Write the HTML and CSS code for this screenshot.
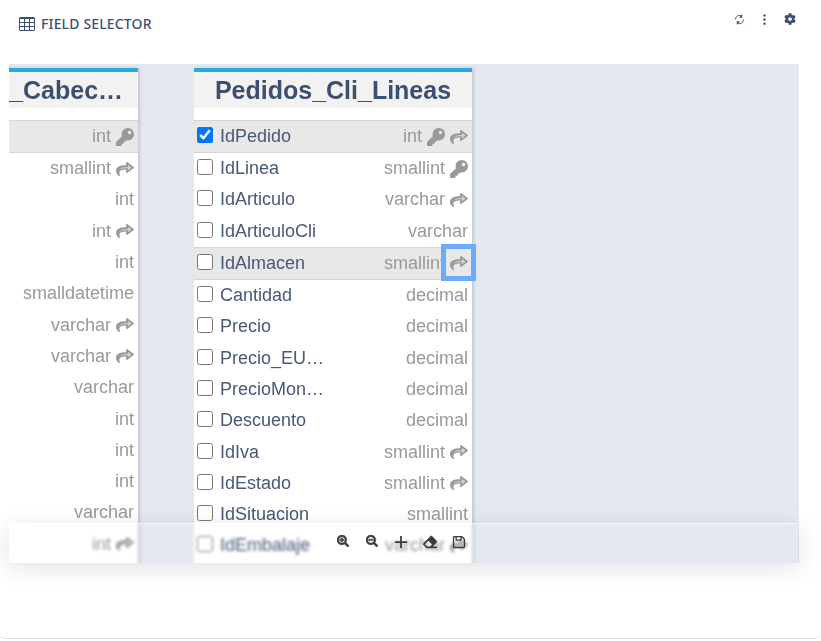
FILE: index.html
```html
<!DOCTYPE html>
<html lang="en">
<head>
  <meta charset="UTF-8" />
  <title>Field Selector</title>
  <link rel="stylesheet" href="styles.css">
</head>
<body>
  <svg class="icon-defs" width="0" height="0">
    <symbol id="key" viewBox="0 0 512 512"><path d="M512 176.001C512 273.203 433.202 352 336 352c-11.22 0-22.19-1.062-32.827-3.069l-24.012 27.014A23.999 23.999 0 0 1 261.223 384H224v40c0 13.255-10.745 24-24 24h-40v40c0 13.255-10.745 24-24 24H24c-13.255 0-24-10.745-24-24v-78.059c0-6.365 2.529-12.47 7.029-16.971l161.802-161.802C163.108 213.814 160 195.271 160 176 160 78.797 238.797.001 335.999 0 433.488-.001 512 78.511 512 176.001zM336 128c0 26.51 21.49 48 48 48s48-21.49 48-48-21.49-48-48-48-48 21.49-48 48z"/></symbol>
    <symbol id="share" viewBox="0 30 512 450" preserveAspectRatio="none"><path d="M503.691 189.836L327.687 37.851C312.281 24.546 288 35.347 288 56.015v80.053C127.371 137.907 0 170.1 0 322.326c0 61.441 39.581 122.309 83.333 154.132 13.653 9.931 33.111-2.533 28.077-18.631C66.066 312.814 132.917 274.316 288 272.085V360c0 20.7 24.3 31.453 39.687 18.164l176.004-152c11.071-9.562 11.086-26.753 0-36.328z"/><path fill="#fff" fill-opacity="0.55" d="M340 115v72c-120 0-205 22-245 90 50-36 130-46 245-46v72l100-94z"/></symbol>
  </svg>

  <div class="card">
    <header class="card-head">
      <div class="card-title">
        <svg class="title-icon" viewBox="0 0 512 512"><path d="M464 32H48C21.49 32 0 53.49 0 80v352c0 26.51 21.49 48 48 48h416c26.51 0 48-21.49 48-48V80c0-26.51-21.49-48-48-48zM160 448H48c-8.837 0-16-7.163-16-16v-80h128v96zm0-128H32v-96h128v96zm0-128H32V96h128v96zm160 256H192v-96h128v96zm0-128H192v-96h128v96zm0-128H192V96h128v96zm160 160v80c0 8.837-7.163 16-16 16H352v-96h128zm0-32H352v-96h128v96zm0-128H352V96h128v96z"/></svg>
        <span>FIELD SELECTOR</span>
      </div>
      <div class="card-actions">
        <svg class="act act-sync" viewBox="0 0 24 24"><path d="M21 12a9 9 0 0 1-14 7.5M3 12a9 9 0 0 1 14-7.5"/><path class="solid" d="M18 0v8h-7zM6 24v-8h7z"/></svg>
        <svg class="act act-dots" viewBox="0 0 6 24"><circle cx="3" cy="3" r="2.6"/><circle cx="3" cy="12" r="2.6"/><circle cx="3" cy="21" r="2.6"/></svg>
        <svg class="act act-cog" viewBox="0 0 512 512"><path d="M487.4 315.7l-42.6-24.6c4.3-23.2 4.3-47 0-70.2l42.6-24.6c4.9-2.8 7.1-8.6 5.5-14-11.1-35.6-30-67.8-54.7-94.6-3.8-4.1-10-5.1-14.8-2.3L380.8 110c-17.9-15.4-38.5-27.3-60.8-35.1V25.8c0-5.6-3.9-10.5-9.4-11.7-36.7-8.2-74.3-7.8-109.2 0-5.5 1.2-9.4 6.1-9.4 11.7V75c-22.2 7.9-42.8 19.8-60.8 35.1L88.7 85.5c-4.9-2.8-11-1.9-14.8 2.3-24.7 26.7-43.6 58.9-54.7 94.6-1.7 5.4.6 11.2 5.5 14L67.3 221c-4.3 23.2-4.3 47 0 70.2l-42.6 24.6c-4.9 2.8-7.1 8.6-5.5 14 11.1 35.6 30 67.8 54.7 94.6 3.8 4.1 10 5.1 14.8 2.3l42.6-24.6c17.9 15.4 38.5 27.3 60.8 35.1v49.2c0 5.6 3.9 10.5 9.4 11.7 36.7 8.2 74.3 7.8 109.2 0 5.5-1.2 9.4-6.1 9.4-11.7v-49.2c22.2-7.9 42.8-19.8 60.8-35.1l42.6 24.6c4.9 2.8 11 1.9 14.8-2.3 24.7-26.7 43.6-58.9 54.7-94.6 1.5-5.5-.7-11.3-5.6-14.1zM256 336c-44.1 0-80-35.9-80-80s35.9-80 80-80 80 35.9 80 80-35.9 80-80 80z"/></svg>
      </div>
    </header>

    <div class="canvas">
      <div class="canvas-clip">
        <div class="db-table db-table-left">
          <h3 class="db-title">Pedidos_Cli_Cabecera</h3>
          <ul class="fields">
            <li class="field is-marked"><span class="type">int</span><svg class="ico"><use href="#key"/></svg></li>
            <li class="field"><span class="type">smallint</span><svg class="ico ico-share"><use href="#share"/></svg></li>
            <li class="field"><span class="type">int</span></li>
            <li class="field"><span class="type">int</span><svg class="ico ico-share"><use href="#share"/></svg></li>
            <li class="field"><span class="type">int</span></li>
            <li class="field"><span class="type">smalldatetime</span></li>
            <li class="field"><span class="type">varchar</span><svg class="ico ico-share"><use href="#share"/></svg></li>
            <li class="field"><span class="type">varchar</span><svg class="ico ico-share"><use href="#share"/></svg></li>
            <li class="field"><span class="type">varchar</span></li>
            <li class="field"><span class="type">int</span></li>
            <li class="field"><span class="type">int</span></li>
            <li class="field"><span class="type">int</span></li>
            <li class="field"><span class="type">varchar</span></li>
            <li class="field"><span class="type">int</span><svg class="ico ico-share"><use href="#share"/></svg></li>
          </ul>
        </div>

        <div class="db-table db-table-right">
          <h3 class="db-title">Pedidos_Cli_Lineas</h3>
          <ul class="fields">
            <li class="field is-marked"><input type="checkbox" checked><span class="name">IdPedido</span><span class="type">int</span><svg class="ico"><use href="#key"/></svg><svg class="ico ico-share"><use href="#share"/></svg></li>
            <li class="field"><input type="checkbox"><span class="name">IdLinea</span><span class="type">smallint</span><svg class="ico"><use href="#key"/></svg></li>
            <li class="field"><input type="checkbox"><span class="name">IdArticulo</span><span class="type">varchar</span><svg class="ico ico-share"><use href="#share"/></svg></li>
            <li class="field"><input type="checkbox"><span class="name">IdArticuloCli</span><span class="type">varchar</span></li>
            <li class="field is-marked"><input type="checkbox"><span class="name">IdAlmacen</span><span class="type">smallint</span><svg class="ico ico-share"><use href="#share"/></svg><span class="focus-ring"></span></li>
            <li class="field"><input type="checkbox"><span class="name">Cantidad</span><span class="type">decimal</span></li>
            <li class="field"><input type="checkbox"><span class="name">Precio</span><span class="type">decimal</span></li>
            <li class="field"><input type="checkbox"><span class="name">Precio_EURO</span><span class="type">decimal</span></li>
            <li class="field"><input type="checkbox"><span class="name">PrecioMoneda</span><span class="type">decimal</span></li>
            <li class="field"><input type="checkbox"><span class="name">Descuento</span><span class="type">decimal</span></li>
            <li class="field"><input type="checkbox"><span class="name">IdIva</span><span class="type">smallint</span><svg class="ico ico-share"><use href="#share"/></svg></li>
            <li class="field"><input type="checkbox"><span class="name">IdEstado</span><span class="type">smallint</span><svg class="ico ico-share"><use href="#share"/></svg></li>
            <li class="field"><input type="checkbox"><span class="name">IdSituacion</span><span class="type">smallint</span></li>
            <li class="field"><input type="checkbox"><span class="name">IdEmbalaje</span><span class="type">varchar</span><svg class="ico ico-share"><use href="#share"/></svg></li>
          </ul>
        </div>
      </div>

      <div class="toolbar">
        <svg class="tool tool-zoom" viewBox="0 0 512 512"><path d="M304 192v32c0 6.6-5.4 12-12 12h-56v56c0 6.6-5.4 12-12 12h-32c-6.6 0-12-5.4-12-12v-56h-56c-6.6 0-12-5.4-12-12v-32c0-6.6 5.4-12 12-12h56v-56c0-6.6 5.4-12 12-12h32c6.6 0 12 5.4 12 12v56h56c6.6 0 12 5.4 12 12zm201 284.7L476.7 505c-9.4 9.4-24.6 9.4-33.9 0L343 405.3c-4.5-4.5-7-10.6-7-17V372c-35.3 27.6-79.7 44-128 44C93.1 416 0 322.9 0 208S93.1 0 208 0s208 93.1 208 208c0 48.3-16.4 92.7-44 128h16.3c6.4 0 12.5 2.5 17 7l99.7 99.7c9.3 9.4 9.3 24.6 0 34zM344 208c0-75.2-60.8-136-136-136S72 132.8 72 208s60.8 136 136 136 136-60.8 136-136z"/></svg>
        <svg class="tool tool-zoom" viewBox="0 0 512 512"><path d="M304 192v32c0 6.6-5.4 12-12 12H124c-6.6 0-12-5.4-12-12v-32c0-6.6 5.4-12 12-12h168c6.6 0 12 5.4 12 12zm201 284.7L476.7 505c-9.4 9.4-24.6 9.4-33.9 0L343 405.3c-4.5-4.5-7-10.6-7-17V372c-35.3 27.6-79.7 44-128 44C93.1 416 0 322.9 0 208S93.1 0 208 0s208 93.1 208 208c0 48.3-16.4 92.7-44 128h16.3c6.4 0 12.5 2.5 17 7l99.7 99.7c9.3 9.4 9.3 24.6 0 34zM344 208c0-75.2-60.8-136-136-136S72 132.8 72 208s60.8 136 136 136 136-60.8 136-136z"/></svg>
        <svg class="tool" viewBox="0 0 448 448"><path d="M196 30h56v166h166v56H252v166h-56V252H30v-56h166z"/></svg>
        <svg class="tool" viewBox="0 0 512 512"><path d="M497.941 273.941c18.745-18.745 18.745-49.137 0-67.882l-160-160c-18.745-18.745-49.136-18.746-67.883 0l-256 256c-18.745 18.745-18.745 49.137 0 67.882l96 96A48.004 48.004 0 0 0 144 480h356c6.627 0 12-5.373 12-12v-40c0-6.627-5.373-12-12-12H355.883l142.058-142.059zm-302.627-62.627l137.373 137.373L265.373 416H150.628l-80-80 124.686-124.686z"/></svg>
        <svg class="tool" viewBox="0 0 448 512"><path d="M433.941 129.941l-83.882-83.882A48 48 0 0 0 316.118 32H48C21.49 32 0 53.49 0 80v352c0 26.51 21.49 48 48 48h352c26.51 0 48-21.49 48-48V163.882a48 48 0 0 0-14.059-33.941zM272 80v80H144V80h128zm122 352H54a6 6 0 0 1-6-6V86a6 6 0 0 1 6-6h42v104c0 13.255 10.745 24 24 24h176c13.255 0 24-10.745 24-24V83.882l78.243 78.243a6 6 0 0 1 1.757 4.243V426a6 6 0 0 1-6 6z"/></svg>
      </div>
    </div>
  </div>
</body>
</html>
```

FILE: styles.css
```css
html, body {
  height: 100%;
}
body {
  margin: 0;
  background: white;
  font-family: "Liberation Sans", Arial, sans-serif;
  color: #3d4f70;
  overflow: hidden;
}
.icon-defs {
  position: absolute;
}
.card {
  box-sizing: border-box;
  height: 639px;
  padding: 0 22px 0 9px;
  border-bottom: 1px solid #dfe1e8;
  border-radius: 0 0 6px 6px;
}
.card-head {
  height: 64px;
  display: flex;
  justify-content: space-between;
  align-items: flex-start;
}
.card-title {
  display: flex;
  align-items: center;
  gap: 6px;
  margin: 15px 0 0 10px;
  font-family: "Noto Sans", sans-serif;
  font-size: 14px;
  font-weight: 500;
  letter-spacing: 0.15px;
  line-height: 18px;
}
.title-icon {
  width: 16px;
  height: 16px;
  fill: #3d4f70;
}
.card-actions {
  display: flex;
  align-items: center;
  gap: 18px;
  margin-top: 13px;
  padding-right: 3px;
}
.act {
  fill: #3d4f70;
}
.act-sync {
  width: 11px;
  height: 11px;
  fill: none;
  stroke: #3d4f70;
  stroke-width: 2;
}
.act-sync .solid {
  fill: #3d4f70;
  stroke: none;
}
.act-dots {
  width: 3px;
  height: 11px;
}
.act-cog {
  width: 12px;
  height: 12px;
}

.canvas {
  position: relative;
  width: 790px;
  height: 499px;
}
.canvas-clip {
  position: relative;
  height: 100%;
  background: #e4e8f1;
  overflow: hidden;
}
.db-table {
  position: absolute;
  top: 4px;
  height: 560px;
  box-sizing: border-box;
  background: white;
  border-top: 4px solid #29abe2;
  box-shadow: 2px 0 3px rgba(0,0,0,0.14);
  will-change: transform;
}
.db-table-left {
  left: -159px;
  width: 288px;
}
.db-table-right {
  left: 185px;
  width: 278px;
}
.db-title {
  height: 36px;
  margin: 0 0 12px;
  padding: 0 16px;
  background: #f2f2f2;
  font-size: 25px;
  line-height: 37px;
  text-align: center;
  white-space: nowrap;
  overflow: hidden;
  text-overflow: ellipsis;
}
.db-table-left .db-title {
  padding-right: 14px;
}
.fields {
  list-style: none;
  margin: 0;
  padding: 0;
}
.field {
  position: relative;
  box-sizing: border-box;
  height: 31.3px;
  padding: 0 4px 0 3px;
  display: flex;
  align-items: center;
  justify-content: flex-end;
  gap: 5px;
  font-size: 18px;
}
.field.is-marked {
  height: 33px;
  background: #e8e8e8;
  border-top: 1px solid #d5d5d5;
  border-bottom: 1px solid #d5d5d5;
}
.field input {
  width: 16px;
  height: 16px;
  margin: 0 2px 3px 0;
  flex: none;
  accent-color: #0075ff;
}
.name {
  flex: 1;
  max-width: 105px;
  margin-right: auto;
  color: #475878;
  white-space: nowrap;
  overflow: hidden;
  text-overflow: ellipsis;
}
.type {
  color: #999;
}
.ico {
  width: 18px;
  height: 18px;
  flex: none;
  fill: #999;
}
.ico-share {
  height: 14px;
}
.focus-ring {
  position: absolute;
  right: -4px;
  top: -4px;
  width: 25px;
  height: 27px;
  border: 5px solid #6daaf7;
}
.toolbar {
  position: absolute;
  left: 0;
  bottom: 0;
  width: 789px;
  height: 40px;
  box-sizing: border-box;
  display: flex;
  justify-content: flex-end;
  align-items: center;
  gap: 15px;
  padding: 0 332px 3px 0;
  border-top: 1px solid rgba(255,255,255,0.7);
  backdrop-filter: blur(1.5px);
  box-shadow: 0 5px 25px rgba(0,0,0,0.12);
}
.tool {
  width: 14px;
  height: 14px;
  fill: #3c3c3c;
}
.tool-zoom {
  width: 12px;
  height: 12px;
  margin: 0 1px 2px;
  stroke: #3c3c3c;
  stroke-width: 24;
}
```
